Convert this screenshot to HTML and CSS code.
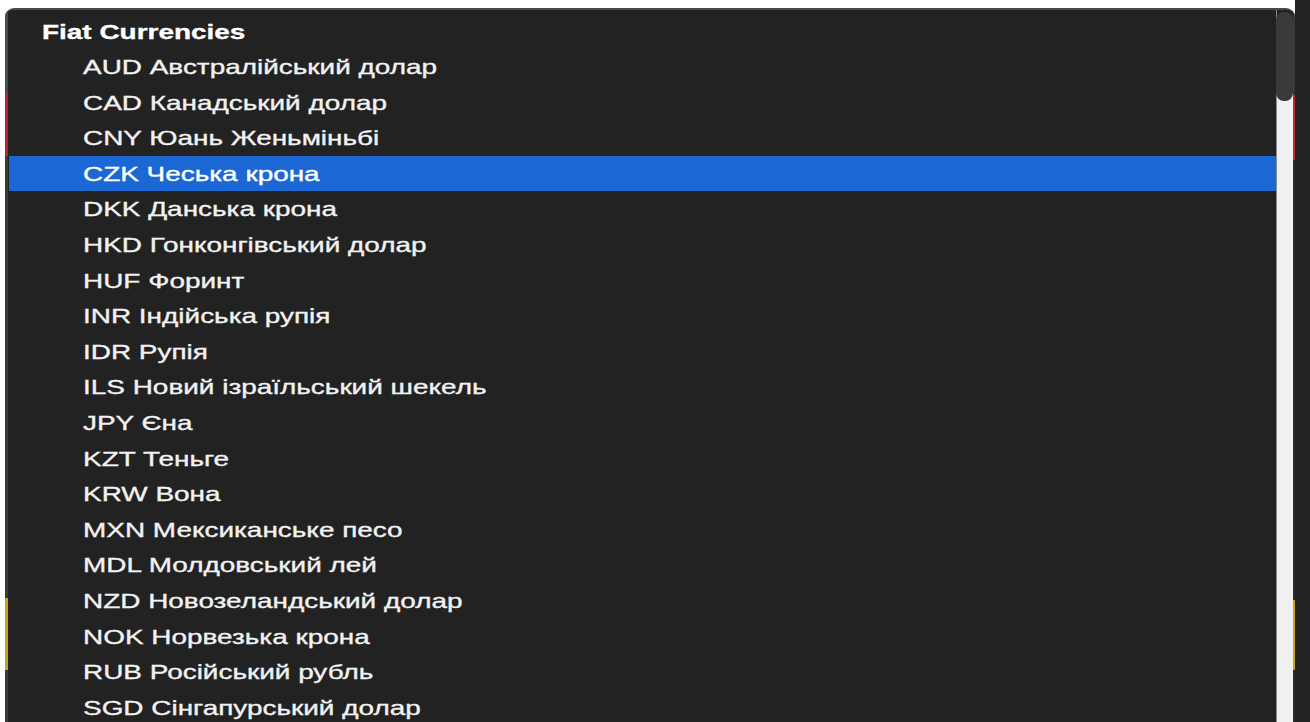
FILE: index.html
```html
<!DOCTYPE html>
<html lang="uk">
<head>
<meta charset="utf-8">
<title>Валюта</title>
<link rel="stylesheet" href="styles.css">
</head>
<body>
<div class="screen">
  <div class="gutter"></div>
  <div class="listbox">
    <div class="rail rail-left"></div>
    <ul class="options">
      <li class="group"><span class="label">Fiat Currencies</span></li>
      <li class="option"><span class="label">AUD Австралійський долар</span></li>
      <li class="option"><span class="label">CAD Канадський долар</span></li>
      <li class="option"><span class="label">CNY Юань Женьміньбі</span></li>
      <li class="option selected"><span class="label">CZK Чеська крона</span></li>
      <li class="option"><span class="label">DKK Данська крона</span></li>
      <li class="option"><span class="label">HKD Гонконгівський долар</span></li>
      <li class="option"><span class="label">HUF Форинт</span></li>
      <li class="option"><span class="label">INR Індійська рупія</span></li>
      <li class="option"><span class="label">IDR Рупія</span></li>
      <li class="option"><span class="label">ILS Новий ізраїльський шекель</span></li>
      <li class="option"><span class="label">JPY Єна</span></li>
      <li class="option"><span class="label">KZT Теньге</span></li>
      <li class="option"><span class="label">KRW Вона</span></li>
      <li class="option"><span class="label">MXN Мексиканське песо</span></li>
      <li class="option"><span class="label">MDL Молдовський лей</span></li>
      <li class="option"><span class="label">NZD Новозеландський долар</span></li>
      <li class="option"><span class="label">NOK Норвезька крона</span></li>
      <li class="option"><span class="label">RUB Російський рубль</span></li>
      <li class="option"><span class="label">SGD Сінгапурський долар</span></li>
    </ul>
    <div class="scrollbar"><div class="thumb"></div></div>
    <div class="rail rail-right"></div>
  </div>
  <div class="backdrop"></div>
</div>
</body>
</html>
```

FILE: styles.css
```css
html, body {
  margin: 0;
  padding: 0;
  background: #ffffff;
}

.screen {
  display: flex;
  width: 1310px;
  height: 722px;
  overflow: hidden;
}

.gutter {
  width: 5px;
  flex: none;
  background: #ffffff;
}

.backdrop {
  flex: 1;
  background: #222222;
}

.listbox {
  display: flex;
  width: 1290px;
  flex: none;
  margin-top: 8px;
  border-top: 2px solid #4a4a4a;
  border-radius: 9px 9px 0 0;
  background: #222222;
  overflow: hidden;
  font-family: "Liberation Sans", Arial, sans-serif;
  font-size: 21px;
  color: #f2f2f2;
}

.rail {
  flex: none;
  width: 3px;
}

.rail-left {
  background: linear-gradient(to bottom,
    #4a4a4a 0 83px,
    #b3262a 83px 146px,
    #3a3a3a 146px 588px,
    #c6a21e 588px 660px,
    #3a3a3a 660px);
}

.rail-right {
  width: 2px;
  background: linear-gradient(to bottom,
    #3a3a3a 0 85px,
    #c3262b 85px 150px,
    #2a2a2a 150px 590px,
    #c6a21e 590px 660px,
    #2a2a2a 660px);
}

.options {
  flex: 1;
  list-style: none;
  margin: 0;
  padding: 3.5px 0 0 0;
}

.options li {
  height: 35.6px;
  line-height: 35.6px;
  white-space: nowrap;
}

.label {
  display: inline-block;
  transform: scaleX(1.33);
  transform-origin: 0 50%;
  -webkit-text-stroke: 0.35px currentColor;
}

.group {
  padding-left: 34px;
  font-weight: bold;
  color: #ffffff;
}

.option {
  padding-left: 75px;
}

.option.selected {
  margin-left: 1px;
  padding-left: 74px;
  background: #1b67d4;
  color: #ffffff;
}

.scrollbar {
  flex: none;
  width: 17px;
  padding-top: 2px;
  background: linear-gradient(to bottom, #222222 0 50px, #f1f1f1 50px);
  box-shadow: inset 1px 0 0 #8a8a8a;
}

.thumb {
  height: 89px;
  border-radius: 8px;
  background: #3a3a3a;
}
```
